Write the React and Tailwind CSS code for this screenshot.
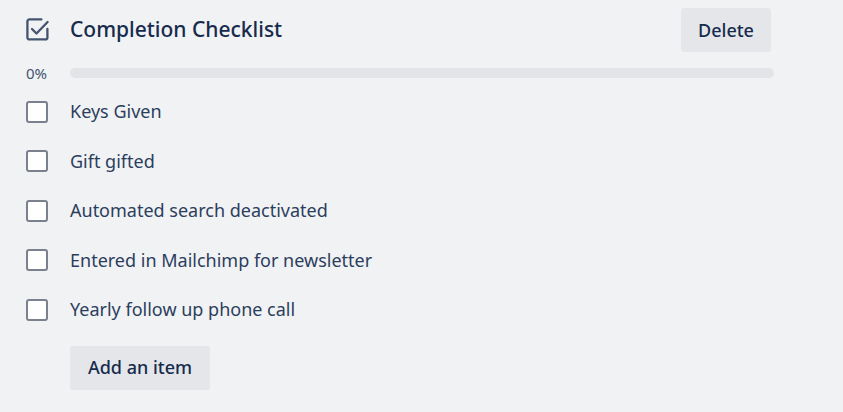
const items = [
  "Keys Given",
  "Gift gifted",
  "Automated search deactivated",
  "Entered in Mailchimp for newsletter",
  "Yearly follow up phone call",
];

const ChecklistIcon = () => (
  <svg width="24" height="24" viewBox="0 0 24 24" fill="none" className="block">
    <path
      d="M21.4 11v8.4a2 2 0 0 1-2 2h-16a2 2 0 0 1-2-2v-16a2 2 0 0 1 2-2h12"
      stroke="#44546f"
      strokeWidth="2.3"
      strokeLinecap="round"
    />
    <path
      d="M6 11l4.5 4.5L21.6 4"
      stroke="#44546f"
      strokeWidth="2.3"
      strokeLinecap="round"
      strokeLinejoin="round"
    />
  </svg>
);

const App = () => {
  return (
    <div
      className="w-[843px] h-[412px] bg-[#f1f2f4] pl-[26px] pr-[69px] overflow-hidden"
      style={{ fontFamily: '"Noto Sans", "Open Sans", sans-serif' }}
    >
      {/* Header */}
      <div className="pt-[8px] flex items-center h-[52px]">
        <div className="w-[44px] flex items-center">
          <ChecklistIcon />
        </div>
        <h2 className="text-[21px] font-medium text-[#172b4d]">Completion Checklist</h2>
        <button className="ml-auto mr-[3px] h-[44px] w-[90px] rounded-[3px] bg-[#e4e6ea] text-[18px] font-medium text-[#172b4d]">
          Delete
        </button>
      </div>

      {/* Progress */}
      <div className="mt-[16px] flex items-center h-[10px]">
        <span className="w-[44px] text-[15px] text-[#44546f]">0%</span>
        <div className="flex-1 h-[10px] rounded-full bg-[#e2e4e8]" />
      </div>

      {/* Items */}
      <div className="mt-[9px]">
        {items.map((item) => (
          <div key={item} className="h-[49.5px] flex items-center">
            <div className="w-[44px]">
              <div className="w-[22px] h-[22px] rounded-[3px] border-2 border-[#7a818c] bg-white" />
            </div>
            <span className="text-[18px] text-[#2c3e5d]">{item}</span>
          </div>
        ))}
      </div>

      <button className="mt-[11px] ml-[44px] h-[44px] w-[140px] rounded-[3px] bg-[#e4e6ea] text-[18px] font-medium text-[#172b4d]">
        Add an item
      </button>
    </div>
  );
};

export default App;
